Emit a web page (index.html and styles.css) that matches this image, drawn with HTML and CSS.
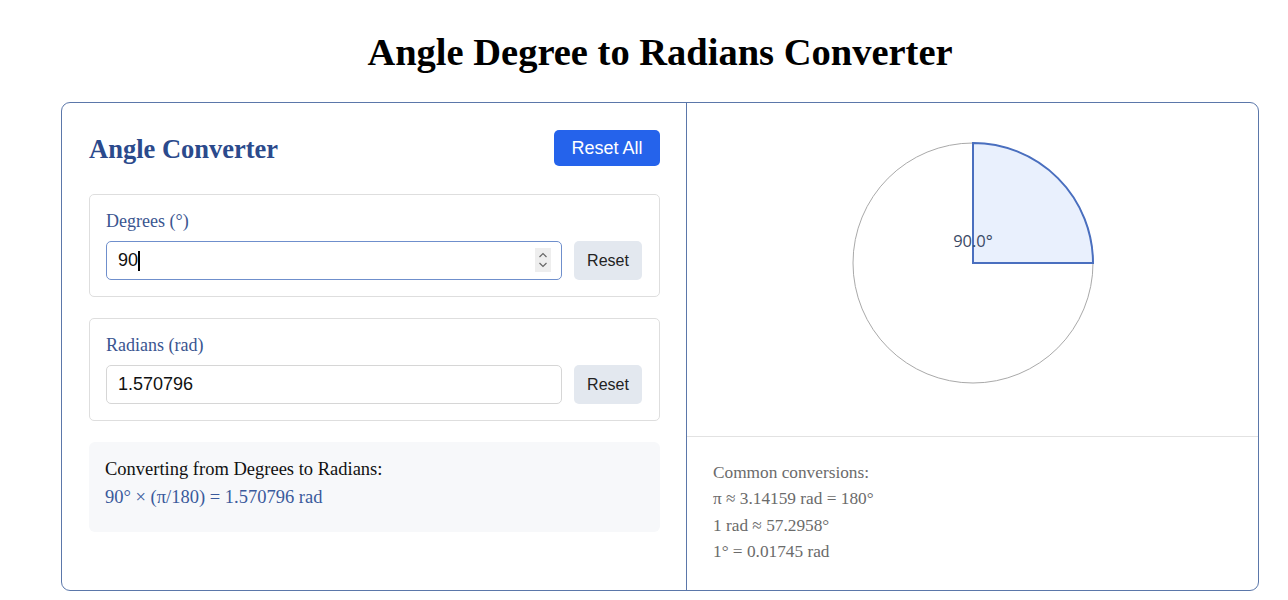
FILE: index.html
```html
<!DOCTYPE html>
<html lang="en">
<head>
<meta charset="utf-8">
<title>Angle Degree to Radians Converter</title>
<link rel="stylesheet" href="styles.css">
</head>
<body>
<div class="page">
  <h1 class="title">Angle Degree to Radians Converter</h1>
  <div class="converter">
    <div class="panel-left">
      <div class="panel-header">
        <h2 class="panel-title">Angle Converter</h2>
        <button class="btn-primary">Reset All</button>
      </div>
      <div class="field-box">
        <label class="field-label">Degrees (°)</label>
        <div class="field-row">
          <div class="input-wrap">
            <input class="field-input is-focused" type="text" value="90">
            <span class="caret"></span>
            <span class="spinner">
              <svg width="16" height="24" viewBox="0 0 16 24"><path d="M4.5 9 L8 5.5 L11.5 9" fill="none" stroke="#666" stroke-width="1.2"/><path d="M4.5 15 L8 18.5 L11.5 15" fill="none" stroke="#666" stroke-width="1.2"/></svg>
            </span>
          </div>
          <button class="btn-reset">Reset</button>
        </div>
      </div>
      <div class="field-box">
        <label class="field-label">Radians (rad)</label>
        <div class="field-row">
          <div class="input-wrap">
            <input class="field-input" type="text" value="1.570796">
          </div>
          <button class="btn-reset">Reset</button>
        </div>
      </div>
      <div class="formula">
        <div class="formula-title">Converting from Degrees to Radians:</div>
        <div class="formula-expr">90° × (π/180) = 1.570796 rad</div>
      </div>
    </div>
    <div class="panel-right">
      <div class="viz">
        <svg class="dial" width="250" height="250" viewBox="0 0 250 250">
          <circle cx="125" cy="125" r="120" fill="#fff" stroke="#a9a9a9" stroke-width="1"/>
          <path d="M125 125 L125 5 A120 120 0 0 1 245 125 Z" fill="#e9f0fd" stroke="#4a6fbf" stroke-width="2" stroke-linejoin="miter"/>
          <text x="125" y="109" text-anchor="middle" class="dial-label">90.0°</text>
        </svg>
      </div>
      <div class="notes">
        <div>Common conversions:</div>
        <div>π ≈ 3.14159 rad = 180°</div>
        <div>1 rad ≈ 57.2958°</div>
        <div>1° = 0.01745 rad</div>
      </div>
    </div>
  </div>
</div>
</body>
</html>
```
FILE: styles.css
```css
* { box-sizing: border-box; }

html, body {
  margin: 0;
  padding: 0;
  background: #ffffff;
}

body {
  font-family: "Liberation Serif", "Times New Roman", serif;
  color: #111;
}

.page {
  width: 1198px;
  margin-left: 61px;
}

.title {
  margin: 30px 0 28px;
  height: 44px;
  font-size: 38.5px;
  line-height: 44px;
  font-weight: bold;
  text-align: center;
  color: #000;
}

.converter {
  display: flex;
  height: 489px;
  border: 1px solid #5b77aa;
  border-radius: 9px;
  overflow: hidden;
}

.panel-left {
  width: 625px;
  flex: none;
  border-right: 1px solid #5b77aa;
  padding: 27px 26px 0 27px;
  display: flex;
  flex-direction: column;
}

.panel-header {
  height: 36px;
  display: flex;
  align-items: center;
  justify-content: space-between;
  margin-bottom: 28px;
}

.panel-title {
  margin: 0;
  font-size: 26.5px;
  font-weight: bold;
  color: #2b4a8c;
  line-height: 30px;
  position: relative;
  top: 1px;
}

.btn-primary {
  width: 106px;
  height: 36px;
  border: none;
  border-radius: 5px;
  background: #2563eb;
  color: #fff;
  font-family: "Liberation Sans", Arial, sans-serif;
  font-size: 18px;
  padding: 0;
}

.field-box {
  border: 1px solid #dedede;
  border-radius: 5px;
  padding: 15px 17px 16px 16px;
  margin-bottom: 21px;
}

.field-label {
  display: block;
  height: 21px;
  font-size: 18px;
  line-height: 22px;
  color: #3a5590;
  margin-bottom: 10px;
}

.field-row {
  display: flex;
  gap: 12px;
}

.input-wrap {
  position: relative;
  flex: 1;
}

.field-input {
  display: block;
  width: 100%;
  height: 39px;
  border: 1px solid #d6d6d6;
  border-radius: 5px;
  padding: 0 11px;
  font-family: "Liberation Sans", Arial, sans-serif;
  font-size: 18px;
  color: #111;
  background: #fff;
  outline: none;
}

.field-input.is-focused {
  border: 1.5px solid #6f8fcc;
}

.caret {
  position: absolute;
  left: 32px;
  top: 10px;
  width: 2px;
  height: 20px;
  background: #000;
}

.spinner {
  position: absolute;
  right: 11px;
  top: 7px;
  width: 16px;
  height: 24px;
  background: #eeeeee;
  display: flex;
}

.btn-reset {
  width: 68px;
  height: 39px;
  flex: none;
  border: none;
  border-radius: 5px;
  background: #e3e8ef;
  color: #222;
  font-family: "Liberation Sans", Arial, sans-serif;
  font-size: 16px;
  padding: 0;
}

.formula {
  background: #f7f8fa;
  border-radius: 6px;
  padding: 14px 16px 22px;
  height: 90px;
  font-size: 18.5px;
  line-height: 26px;
}

.formula-title {
  color: #111;
}

.formula-expr {
  margin-top: 2px;
  color: #3a5a9c;
}

.panel-right {
  flex: 1;
  display: flex;
  flex-direction: column;
}

.viz {
  height: 334px;
  flex: none;
  border-bottom: 1px solid #e2e2e2;
  display: flex;
  justify-content: center;
  padding-top: 35px;
}

.dial {
  display: block;
}

.dial-label {
  font-family: "Open Sans", "Noto Sans", sans-serif;
  font-size: 16.5px;
  fill: #3b4a66;
}

.notes {
  flex: 1;
  padding: 23px 26px 0;
  font-size: 17.3px;
  line-height: 26.4px;
  color: #6b6b6b;
}
```
